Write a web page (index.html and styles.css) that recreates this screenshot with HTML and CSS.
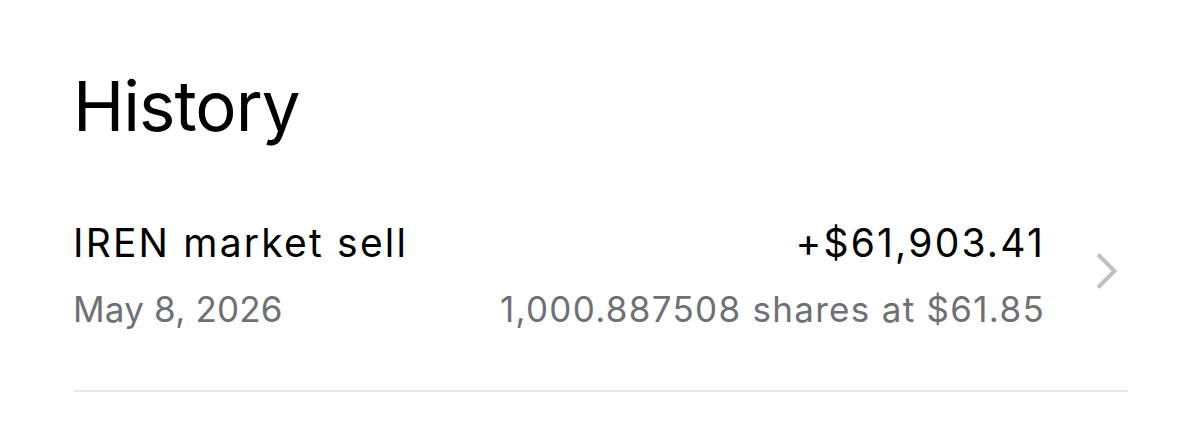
FILE: index.html
```html
<!DOCTYPE html>
<html lang="en">
<head>
<meta charset="utf-8">
<title>History</title>
<link rel="stylesheet" href="styles.css">
</head>
<body>
<main class="page">
  <h1 class="title">History</h1>
  <div class="row">
    <div class="col-left">
      <div class="primary">IREN market sell</div>
      <div class="secondary date">May 8, 2026</div>
    </div>
    <div class="col-right">
      <div class="primary">+$61,903.41</div>
      <div class="secondary detail">1,000.887508 shares at $61.85</div>
    </div>
    <svg class="chevron" width="23" height="38" viewBox="0 0 23 38" aria-hidden="true">
      <path d="M3 2.5 L19.5 19 L3 35.5" fill="none" stroke="#bfbfc4" stroke-width="4" stroke-linecap="butt" stroke-linejoin="miter"/>
    </svg>
  </div>
  <div class="divider"></div>
</main>
</body>
</html>
```
FILE: styles.css
```css
html, body {
  margin: 0;
  padding: 0;
  background: #ffffff;
}
body {
  font-family: Inter, "Liberation Sans", sans-serif;
  color: #000000;
}
.page {
  padding: 64px 72px 0 73px;
}
.title {
  margin: 0;
  font-size: 69px;
  font-weight: 400;
  line-height: 84px;
  letter-spacing: -1px;
}
.row {
  display: flex;
  align-items: center;
  margin-top: 72px;
}
.col-left {
  flex: 1;
}
.col-right {
  text-align: right;
}
.primary {
  font-size: 39px;
  line-height: 46px;
  letter-spacing: 2.2px;
}
.secondary {
  font-size: 35px;
  line-height: 44px;
  color: #6e7075;
  margin-top: 21px;
}
.date {
  letter-spacing: 0.2px;
}
.detail {
  letter-spacing: 1.3px;
}
.chevron {
  flex: none;
  margin-left: 50px;
  margin-right: 10px;
  margin-bottom: 9px;
}
.divider {
  height: 2px;
  background: #e7e7e7;
  margin-top: 59px;
  margin-left: 1px;
}
```
